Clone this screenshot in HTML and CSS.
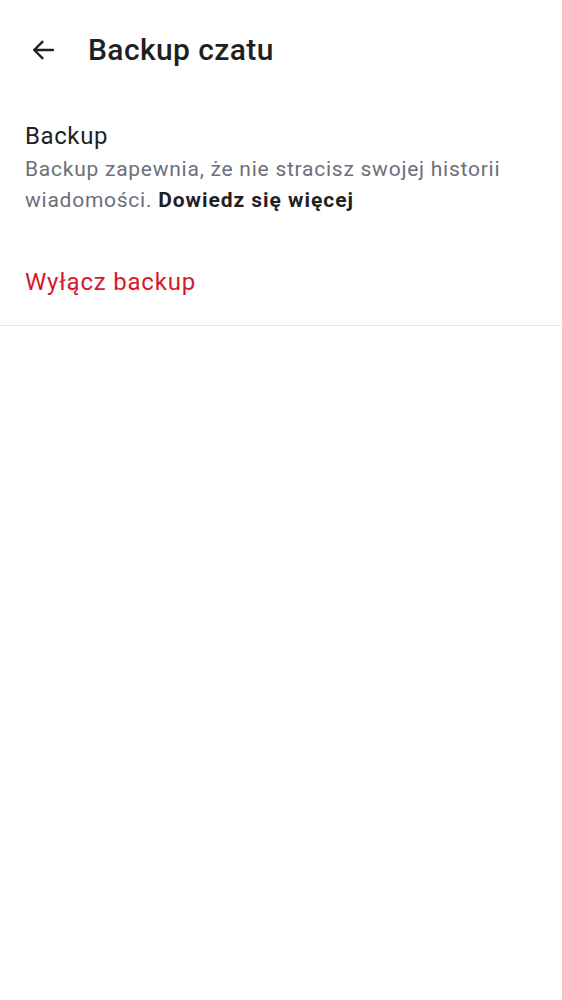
FILE: index.html
```html
<!DOCTYPE html>
<html lang="pl">
<head>
<meta charset="utf-8">
<link rel="stylesheet" href="styles.css">
</head>
<body>
<header class="topbar">
  <button class="back" aria-label="Wstecz">
    <svg width="28" height="28" viewBox="0 0 24 24"><path d="M20.5 12H4.5M11.5 5l-7 7 7 7" fill="none" stroke="#1f1f24" stroke-width="2.1" stroke-linecap="round" stroke-linejoin="round"/></svg>
  </button>
  <h1 class="title">Backup czatu</h1>
</header>
<section class="info">
  <div class="info-title">Backup</div>
  <p class="info-desc">Backup zapewnia, że nie stracisz swojej historii wiadomości. <b>Dowiedz się więcej</b></p>
</section>
<div class="action">Wyłącz backup</div>
</body>
</html>
```
FILE: styles.css
```css
html, body { margin: 0; padding: 0; background: #fff; }
body { font-family: Roboto, "Noto Sans", sans-serif; color: #1f1f24; }
.topbar { display: flex; align-items: center; height: 100px; padding-left: 29px; box-sizing: border-box; }
.back { border: 0; background: none; padding: 0; width: 28px; height: 28px; display: flex; align-items: center; justify-content: center; margin-right: 31px; }
.title { margin: 0; font-size: 30px; line-height: 36px; font-weight: 500; letter-spacing: 0.4px; color: #1f1f24; }
.info { padding: 21px 25px 0; }
.info-title { font-size: 24px; line-height: 30px; letter-spacing: 0.6px; color: #1f1f24; }
.info-desc { margin: 3px 0 0; font-size: 21px; line-height: 31px; letter-spacing: 0.75px; color: #6b6f7a; }
.info-desc b { color: #1f1f24; font-weight: 700; letter-spacing: 0.95px; }
.action { padding: 51px 25px 28px; font-size: 24px; line-height: 30px; letter-spacing: 0.8px; color: #d8182a; border-bottom: 1px solid #e8e8ec; }
```
